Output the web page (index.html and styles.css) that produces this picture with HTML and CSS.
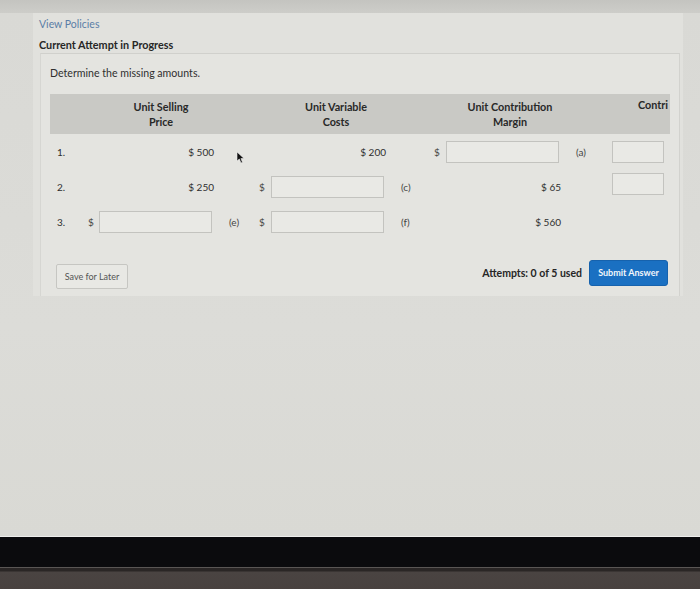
FILE: index.html
```html
<!DOCTYPE html>
<html>
<head>
<meta charset="utf-8">
<link rel="stylesheet" href="styles.css">
</head>
<body>
<div class="topstrip"></div>
<div class="screen">
  <div class="panel">
    <a class="policies">View Policies</a>
    <div class="attempt-title">Current Attempt in Progress</div>
    <div class="question">
      <p class="prompt">Determine the missing amounts.</p>
      <div class="table">
        <div class="thead">
          <div></div>
          <div class="th">Unit Selling<br>Price</div>
          <div></div>
          <div class="th">Unit Variable<br>Costs</div>
          <div></div>
          <div class="th">Unit Contribution<br>Margin</div>
          <div></div>
          <div class="th th-clip">Contri</div>
        </div>
        <div class="row">
          <div class="num">1.</div>
          <div class="cell"><span class="amt">$ 500</span></div>
          <div class="lbl"></div>
          <div class="cell"><span class="amt">$ 200</span></div>
          <div class="lbl"></div>
          <div class="cell"><span class="dol">$</span><span class="inp"></span></div>
          <div class="lbl">(a)</div>
          <div class="cell last"><span class="inp"></span></div>
        </div>
        <div class="row">
          <div class="num">2.</div>
          <div class="cell"><span class="amt">$ 250</span></div>
          <div class="lbl"></div>
          <div class="cell"><span class="dol">$</span><span class="inp"></span></div>
          <div class="lbl">(c)</div>
          <div class="cell"><span class="amt">$ 65</span></div>
          <div class="lbl"></div>
          <div class="cell last"><span class="inp up"></span></div>
        </div>
        <div class="row">
          <div class="num">3.</div>
          <div class="cell"><span class="dol">$</span><span class="inp"></span></div>
          <div class="lbl">(e)</div>
          <div class="cell"><span class="dol">$</span><span class="inp"></span></div>
          <div class="lbl">(f)</div>
          <div class="cell"><span class="amt">$ 560</span></div>
          <div class="lbl"></div>
          <div class="cell last"></div>
        </div>
        <svg class="cursor" width="9" height="13" viewBox="0 0 9 13"><path d="M1 1 L1 10 L3.3 8 L5 12 L6.5 11.3 L4.9 7.6 L8 7.4 Z" fill="#111" stroke="#eee" stroke-width="0.6"/></svg>
      </div>
      <div class="actions">
        <button class="save">Save for Later</button>
        <div class="submit-group">
          <span class="attempts">Attempts: 0 of 5 used</span>
          <button class="submit">Submit Answer</button>
        </div>
      </div>
    </div>
  </div>
</div>
<div class="bezel"></div>
<div class="base"></div>
</body>
</html>
```

FILE: styles.css
```css
* { box-sizing: border-box; }
html, body { margin: 0; padding: 0; }
body {
  width: 700px;
  height: 589px;
  overflow: hidden;
  display: flex;
  flex-direction: column;
  font-family: Lato, "Open Sans", sans-serif;
  color: #2e2e2e;
  background: #d6d6d2;
}
.topstrip {
  height: 13px;
  background: linear-gradient(#c4c4c0, #cdcdc9);
}
.screen {
  height: 523px;
  background: linear-gradient(180deg, #d9d9d5 0%, #dcdcd8 60%, #d9d9d4 100%);
  padding-left: 33px;
}
.panel {
  width: 650px;
  height: 283px;
  background: #e1e1dd;
  padding-top: 5px;
  display: flex;
  flex-direction: column;
}
.policies {
  display: block;
  padding-left: 6px;
  font-size: 10.5px;
  line-height: 13px;
  color: #5b7ea6;
}
.attempt-title {
  padding-left: 6px;
  margin-top: 7px;
  font-size: 10.8px;
  font-weight: 700;
  line-height: 13px;
  color: #262626;
}
.question {
  margin: 2px 3px 0 7px;
  flex: 1;
  border-top: 1px solid #d0d0cc;
  border-left: 1px solid #d6d6d2;
  border-right: 1px solid #d2d2ce;
  background: #e4e4e0;
  padding: 12px 11px 0 9px;
  display: flex;
  flex-direction: column;
}
.prompt {
  margin: 0;
  font-size: 10.6px;
  line-height: 14px;
  color: #2f2f2f;
}
.table {
  position: relative;
  margin-top: 14px;
  width: 620px;
  overflow: hidden;
}
.thead, .row {
  display: grid;
  grid-template-columns: 34px 134px 37px 135px 40px 135px 40px 65px;
}
.thead {
  height: 40px;
  background: #c9c9c5;
  grid-template-columns: 50px 122px 53px 122px 53px 120px 35px 65px;
  align-items: center;
}
.th {
  font-size: 10.8px;
  font-weight: 700;
  line-height: 15px;
  text-align: center;
  color: #282828;
}
.th-clip {
  text-align: left;
  padding-left: 33px;
  align-self: start;
  margin-top: 3px;
  white-space: nowrap;
}
.row {
  height: 35px;
  align-items: center;
  font-size: 10px;
}
.row:first-of-type { margin-top: 1px; }
.num {
  padding-left: 7px;
  color: #2f2f2f;
}
.cell {
  display: flex;
  align-items: center;
  justify-content: flex-end;
  padding-right: 4px;
}
.cell.last { justify-content: flex-start; padding-left: 7px; }
.amt { color: #2f2f2f; }
.dol {
  margin-right: auto;
  padding-left: 4px;
  color: #444;
}
.inp {
  width: 113px;
  height: 22px;
  border: 1px solid #c3c3bf;
  background: #e9e9e5;
  margin-right: 2px;
}
.cell.last .inp { width: 70px; }
.inp.up { margin-top: -6px; }
.lbl {
  padding-left: 11px;
  color: #444;
}
.cursor {
  position: absolute;
  left: 186px;
  top: 57px;
}
.actions {
  margin-top: 17px;
  display: flex;
  justify-content: space-between;
  align-items: center;
  padding-left: 6px;
}
.save {
  font-family: Lato, sans-serif;
  width: 72px;
  height: 25px;
  margin-top: 8px;
  font-size: 9px;
  color: #555;
  background: #e8e8e4;
  border: 1px solid #c6c6c2;
  border-radius: 2px;
  padding: 0;
}
.submit-group {
  display: flex;
  align-items: center;
  gap: 7px;
}
.attempts {
  font-size: 10.5px;
  font-weight: 700;
  color: #262626;
}
.submit {
  font-family: Lato, sans-serif;
  width: 79px;
  height: 26px;
  background: #1a70c2;
  color: #f2f6fb;
  border: 1px solid #1662ad;
  border-radius: 3px;
  font-size: 9px;
  font-weight: 700;
  padding: 0;
}
.bezel {
  height: 32px;
  background: #0b0b0d;
  border-top: 1px solid #eeeeec;
  border-bottom: 1px solid #5a5654;
}
.base {
  flex: 1;
  background: linear-gradient(#2a2625 0, #2a2625 3px, #4a4442 4px, #48413f 100%);
}
```
